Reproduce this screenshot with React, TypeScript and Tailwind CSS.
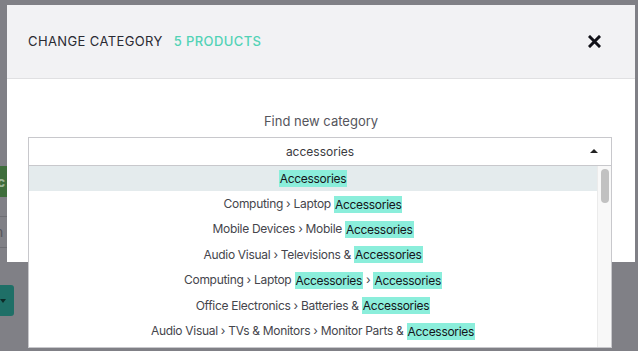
const categories: string[][] = [
  ['', 'Accessories'],
  ['Computing › Laptop ', 'Accessories'],
  ['Mobile Devices › Mobile ', 'Accessories'],
  ['Audio Visual › Televisions & ', 'Accessories'],
  ['Computing › Laptop ', 'Accessories', ' › ', 'Accessories'],
  ['Office Electronics › Batteries & ', 'Accessories'],
  ['Audio Visual › TVs & Monitors › Monitor Parts & ', 'Accessories'],
];

const App = () => {
  return (
    <div
      className="relative w-[638px] h-[351px] overflow-hidden bg-[#808086]"
      style={{ fontFamily: 'Inter, "Noto Sans", sans-serif' }}
    >
      {/* Page behind the overlay (only its left edge shows) */}
      <div className="w-[14px] flex flex-col pt-[58px] overflow-hidden">
        <div className="h-[18px] text-[15px] leading-[18px] text-[#4a4a50] -ml-[8px]">a</div>
        <div className="mt-[90px] w-[7px] h-[31px] bg-[#3f6e3c] text-[#9bb598] text-[14px] font-bold leading-[31px] -indent-[3px] overflow-hidden">
          c
        </div>
        <div className="mt-[19px] w-[7px] border-t border-b border-[#6e6e74] h-[32px] text-[14px] leading-[30px] text-[#55555a] overflow-hidden -indent-[5px]">
          n
        </div>
        <div className="mt-[37px] w-[14px] h-[31px] rounded-r-[3px] bg-[#1f6f67] flex items-center">
          <div className="w-0 h-0 border-l-[3px] border-r-[3px] border-t-[4px] border-l-transparent border-r-transparent border-t-[#0d2b28]" />
        </div>
      </div>

      {/* Modal */}
      <div className="absolute left-[7px] top-[5px] w-[628px] h-[257px] bg-white">
        <div className="h-[74px] bg-[#f2f2f4] border-b border-[#e0e0e2] flex items-center pl-[21px] pr-[34px]">
          <span className="text-[13px] tracking-[0.03em] text-[#2a2a32]">CHANGE CATEGORY</span>
          <span className="ml-[11px] text-[13px] font-medium tracking-[0.03em] text-[#52d2b6]">5 PRODUCTS</span>
          <svg className="ml-auto" width="13" height="13" viewBox="0 0 13 13">
            <path d="M2 2 L11 11 M11 2 L2 11" stroke="#111118" strokeWidth="3" strokeLinecap="square" />
          </svg>
        </div>
        <div className="px-[21px] pt-[32px]">
          <div className="text-center text-[13px] leading-[20px] text-[#55555c]">Find new category</div>
          <div className="relative mt-[6px] w-[584px]">
            <div className="relative h-[29px] border border-[#c8c8cc] bg-white flex items-center justify-center text-[12px] text-[#3a3a40]">
              accessories
              <div className="absolute right-[13px] top-[11px] w-0 h-0 border-l-[4px] border-r-[4px] border-b-[4px] border-l-transparent border-r-transparent border-b-[#222]" />
            </div>
            {/* Open dropdown list */}
            <div className="absolute left-0 top-[29px] w-[584px] h-[182px] bg-white border border-t-0 border-[#c8c8cc] flex overflow-hidden">
              <div className="flex-1 flex flex-col">
                {categories.map((parts, i) => (
                  <div
                    key={i}
                    className={`h-[25.4px] shrink-0 flex items-center justify-center text-[12px] tracking-[-0.025em] text-[#45454c] whitespace-pre ${i === 0 ? 'bg-[#e4ebed]' : ''}`}
                  >
                    {parts.map((p, j) =>
                      j % 2 === 1 ? (
                        <span key={j} className="bg-[#8beedb] text-[#15151a] px-px leading-[17px]">
                          {p}
                        </span>
                      ) : (
                        <span key={j}>{p}</span>
                      ),
                    )}
                  </div>
                ))}
              </div>
              <div className="w-[14px] bg-[#f8f8f8] border-l border-[#ebebeb] pt-[3px] flex justify-center">
                <div className="w-[8px] h-[34px] rounded-full bg-[#c1c1c1]" />
              </div>
            </div>
          </div>
        </div>
      </div>
    </div>
  );
};

export default App;
